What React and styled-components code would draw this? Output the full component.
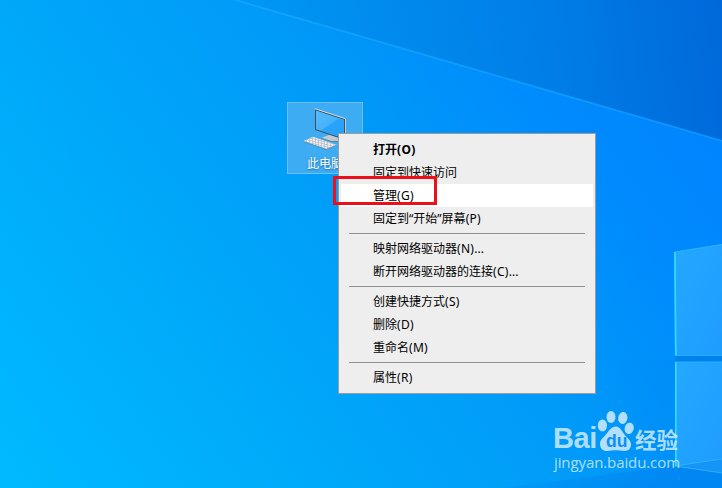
import React from "react";
import styled, { createGlobalStyle } from "styled-components";

const GlobalStyle = createGlobalStyle`
  body {
    margin: 0;
    overflow: hidden;
  }
  * {
    box-sizing: border-box;
  }
`;

const Desktop = styled.main`
  position: relative;
  width: 722px;
  height: 488px;
  overflow: hidden;
  cursor: default;
  font-family: "Noto Sans", "Noto Sans CJK SC", sans-serif;
  background: linear-gradient(54deg, #00baff 0%, #00a7f9 34%, #0098f8 60%, #008afd 78%, #0080ff 100%);
`;

const Wallpaper = styled.svg`
  position: absolute;
  top: 0;
  left: 0;
`;

const Shortcut = styled.div`
  position: absolute;
  left: 287px;
  top: 102px;
  width: 76px;
  height: 72px;
  display: flex;
  flex-direction: column;
  align-items: center;
  padding-top: 2px;
  border: 1px solid #6cc0f8;
  background: #3eacf3;
  color: white;
  font-size: 12px;
  line-height: 16px;
  text-shadow: 0 1px 2px rgba(0, 40, 90, 0.5);
  svg {
    display: block;
    margin-bottom: 1px;
  }
`;

const ContextMenu = styled.ul`
  position: absolute;
  left: 338px;
  top: 133px;
  width: 258px;
  margin: 0;
  padding: 4px 2px;
  list-style: none;
  border: 1px solid #9c9c9c;
  background: #eeeeee;
`;

const MenuItem = styled.li`
  height: 23px;
  padding-left: 32px;
  font-size: 12px;
  line-height: 23px;
  white-space: nowrap;
  color: #000;
  font-weight: ${(props) => (props.$bold ? 700 : 400)};
  background: ${(props) => (props.$active ? "#fff" : "transparent")};
`;

const AccessKey = styled.span`
  letter-spacing: 0.3px;
`;

const Separator = styled.li`
  height: 1px;
  margin: 3px 8px;
  background: #919191;
`;

const Highlight = styled.div`
  position: absolute;
  left: 333px;
  top: 176px;
  width: 104px;
  height: 29px;
  border: 3px solid #ed0f1a;
`;

const Watermark = styled.div`
  position: absolute;
  left: 553px;
  top: 410px;
  width: 130px;
  color: rgba(222, 241, 255, 0.8);
`;

const Brand = styled.div`
  display: flex;
  align-items: flex-end;
  height: 42px;
`;

const Latin = styled.span`
  width: 43px;
  font-family: "Liberation Sans", sans-serif;
  font-size: 29px;
  font-weight: 700;
  line-height: 27px;
  letter-spacing: -0.4px;
`;

const Hanzi = styled.span`
  margin-left: 1px;
  font-family: "Noto Sans CJK SC", sans-serif;
  font-size: 21.5px;
  font-weight: 700;
  line-height: 27px;
  white-space: nowrap;
`;

const Address = styled.div`
  padding-left: 1px;
  font-family: "Open Sans", sans-serif;
  font-size: 15px;
  line-height: 20px;
  letter-spacing: -0.1px;
  white-space: nowrap;
`;

const menu = [
  { label: "打开", accessKey: "(O)", bold: true },
  { label: "固定到快速访问" },
  { label: "管理", accessKey: "(G)", active: true },
  { label: "固定到“开始”屏幕", accessKey: "(P)" },
  null,
  { label: "映射网络驱动器", accessKey: "(N)", more: true },
  { label: "断开网络驱动器的连接", accessKey: "(C)", more: true },
  null,
  { label: "创建快捷方式", accessKey: "(S)" },
  { label: "删除", accessKey: "(D)" },
  { label: "重命名", accessKey: "(M)" },
  null,
  { label: "属性", accessKey: "(R)" },
];

function Background() {
  return (
    <Wallpaper width="722" height="488" viewBox="0 0 722 488">
      <defs>
        <linearGradient id="sky" gradientUnits="userSpaceOnUse" x1="230" y1="60" x2="740" y2="0">
          <stop offset="0" stopColor="#0090e8" stopOpacity="0.1" />
          <stop offset="0.25" stopColor="#008cec" stopOpacity="0.8" />
          <stop offset="0.65" stopColor="#007ce6" />
          <stop offset="1" stopColor="#0066d9" />
        </linearGradient>
        <linearGradient id="ray" gradientUnits="userSpaceOnUse" x1="230" y1="0" x2="722" y2="141">
          <stop offset="0" stopColor="#12a4fc" />
          <stop offset="1" stopColor="#0c94ff" />
        </linearGradient>
        <linearGradient id="floor" gradientUnits="userSpaceOnUse" x1="600" y1="440" x2="625" y2="500">
          <stop offset="0" stopColor="#0080f0" stopOpacity="0.1" />
          <stop offset="1" stopColor="#0084f0" stopOpacity="0.7" />
        </linearGradient>
        <linearGradient id="shade" gradientUnits="userSpaceOnUse" x1="600" y1="0" x2="722" y2="0">
          <stop offset="0" stopColor="#0084f2" stopOpacity="0" />
          <stop offset="1" stopColor="#0082f0" />
        </linearGradient>
        <linearGradient id="pane" x1="0" y1="0" x2="1" y2="1">
          <stop offset="0" stopColor="#24a8ff" />
          <stop offset="1" stopColor="#1e9cff" />
        </linearGradient>
      </defs>
      <path d="M235 0L722 141V0Z" fill="url(#sky)" />
      <path d="M228 -2L722 141" stroke="url(#ray)" strokeWidth="1.8" />
      <path d="M600 360H722V488H600Z" fill="url(#shade)" opacity="0.4" />
      <path d="M500 488L675 466H722V488Z" fill="url(#floor)" />
      <path d="M674 252L722 244V355H675Z" fill="url(#pane)" />
      <path d="M675 362H722V473L675 466Z" fill="url(#pane)" />
      <path d="M675 355.5H722V362H675Z" fill="#0082ee" />
      <path d="M675 466L722 459V473Z" fill="#1694f8" />
      <path
        d="M675 252L722 244.5M675 355.5H722M675 362H722M675 466L722 459M675 466L722 473"
        fill="none"
        stroke="#2cbaff"
        strokeWidth="0.8"
      />
      <path d="M674.9 252L675.8 355.5M675.8 362V466" stroke="#32dcff" strokeWidth="1.7" />
    </Wallpaper>
  );
}

function ComputerIcon() {
  return (
    <svg width="48" height="50" viewBox="0 0 48 50">
      <defs>
        <linearGradient id="screen" x1="0" y1="0" x2="1" y2="1">
          <stop offset="0" stopColor="#55bbfb" />
          <stop offset="1" stopColor="#35a9fb" />
        </linearGradient>
        <pattern id="keys" width="3" height="2.4" patternUnits="userSpaceOnUse" patternTransform="skewY(14)">
          <rect width="3" height="2.4" fill="#b9c1c7" />
          <rect width="2.2" height="1.6" fill="#eef2f4" />
        </pattern>
      </defs>
      <path d="M20 33L29 29.5L38 33V36L30 36Z" fill="#c3cbd1" />
      <path d="M20 33L30 36.4H38" fill="none" stroke="#5d7d94" strokeWidth="0.8" />
      <path d="M14 4L44 14V35L14 25Z" fill="#3f4f5c" />
      <path d="M13.6 3.6L44.2 13.6" stroke="#d3d9dd" strokeWidth="1" />
      <path d="M44.5 14V35" stroke="#c5ccd1" strokeWidth="1" />
      <path d="M15 5.4L43 14.8V33.4L15 24.2Z" fill="url(#screen)" />
      <path d="M20 25.6L37 14L43 15.5V33.2Z" fill="#209cfa" opacity="0.7" />
      <path d="M2.5 36L12 31.8L36 39.8L26 44Z" fill="url(#keys)" />
      <path d="M2.5 36.8L25 44.6L35 40.6" fill="none" stroke="#6a8aa0" strokeWidth="0.8" />
    </svg>
  );
}

function Paw() {
  return (
    <svg width="38" height="43" viewBox="0 0 38 43">
      <g fill="currentColor">
        <ellipse cx="6.4" cy="16.6" rx="4.6" ry="6" />
        <ellipse cx="15" cy="8" rx="4.5" ry="6" />
        <ellipse cx="26.8" cy="9" rx="4.6" ry="6" transform="rotate(10 26.8 9)" />
        <ellipse cx="33.2" cy="19.4" rx="4.5" ry="5.7" transform="rotate(12 33.2 19.4)" />
        <path d="M20 17.5C15 17.5 12.5 22.5 9.5 26C6 30 4 31 4 35C4 39.5 7 42 11 42C14.5 42 16 41.3 19.5 41.3C22.5 41.3 25 42 28.5 42C32.5 42 35 39.5 35 35.8C35 31.5 32 29.5 29.2 26.5C26 23 24.5 17.5 20 17.5Z" />
      </g>
      <text
        x="10"
        y="38"
        fontFamily="Liberation Sans, sans-serif"
        fontSize="18"
        fontWeight="700"
        fill="#0a90f7"
        textLength="21.5"
        lengthAdjust="spacingAndGlyphs"
      >
        du
      </text>
    </svg>
  );
}

function App() {
  return (
    <>
      <GlobalStyle />
      <Desktop>
        <Background />
        <Shortcut>
          <ComputerIcon />
          <span>此电脑</span>
        </Shortcut>
        <ContextMenu>
          {menu.map((item, index) =>
            item ? (
              <MenuItem key={item.label} $bold={item.bold} $active={item.active}>
                {item.label}
                {item.accessKey && <AccessKey>{item.accessKey}</AccessKey>}
                {item.more && "..."}
              </MenuItem>
            ) : (
              <Separator key={index} />
            )
          )}
        </ContextMenu>
        <Highlight />
        <Watermark>
          <Brand>
            <Latin>Bai</Latin>
            <Paw />
            <Hanzi>经验</Hanzi>
          </Brand>
          <Address>jingyan.baidu.com</Address>
        </Watermark>
      </Desktop>
    </>
  );
}

export default App;
